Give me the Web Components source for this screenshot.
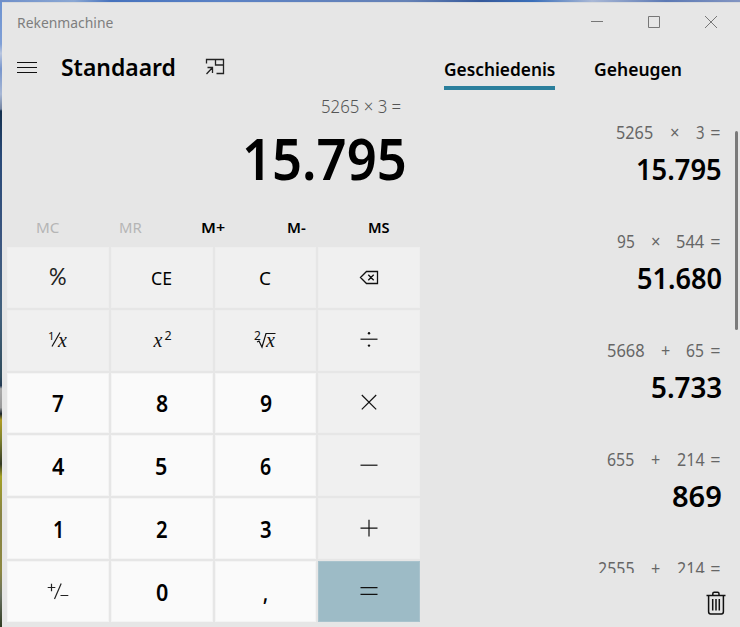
<!DOCTYPE html>
<html lang="nl"><head><meta charset="utf-8"><title>Rekenmachine</title>
<style>html,body{margin:0;width:740px;height:627px;overflow:hidden;background:#e6e6e6}</style></head>
<body><calc-window></calc-window>
<script>
const define=(name,html,init)=>{
  const t=document.createElement('template');t.innerHTML=html;
  customElements.define(name,class extends HTMLElement{
    connectedCallback(){
      if(this.shadowRoot)return;
      this.attachShadow({mode:'open'}).append(t.content.cloneNode(true));
      if(init)init.call(this,this.shadowRoot);
    }
  });
};
const ctx=document.createElement('canvas').getContext('2d');

/* One line of text condensed or widened to a given ink width */
define('fit-text',`<style>
:host{display:block;flex:none;white-space:pre}
span{display:block;width:max-content;transform-origin:0 50%}
</style><span><slot></slot></span>`,function(r){
  const cs=getComputedStyle(this),s=r.querySelector('span');
  ctx.font=`${cs.fontStyle} ${cs.fontWeight} ${cs.fontSize} ${cs.fontFamily}`;
  const m=ctx.measureText(this.textContent),ink=m.actualBoundingBoxRight+m.actualBoundingBoxLeft;
  const w=+this.getAttribute('ink'),k=w/ink;
  this.style.width=w+'px';
  s.style.transform=`scaleX(${k})`;
  s.style.marginLeft=m.actualBoundingBoxLeft*k+'px';
});

define('title-bar',`<style>
:host{display:flex;align-items:center;height:40px;padding:0 22px 0 15px;box-sizing:border-box;justify-content:space-between}
fit-text{font-size:15px;line-height:20px;color:#7e7e7e;padding-left:1px}
div{display:flex;gap:43px}
svg{display:block;width:14px;height:14px;fill:none;stroke:#777}
</style><fit-text ink="95">Rekenmachine</fit-text><div>
<svg><path d="M1 6.5H13"/></svg><svg><path d="M1.5 1.5h11v11h-11z"/></svg><svg><path d="M1 1L13 13M13 1L1 13"/></svg></div>`);

define('mode-header',`<style>
:host{display:flex;align-items:center;height:48px;padding:1px 0 0 15px}
svg{display:block;fill:none;stroke:#111;flex:none}
fit-text{font-size:24px;line-height:48px;font-weight:600;margin-left:24.5px}
.pin{margin-left:30px}
</style><svg width="20" height="14"><path d="M0 2.5H20M0 7.5H20M0 12.5H20"/></svg>
<fit-text ink="113">Standaard</fit-text>
<svg class="pin" width="20" height="18"><g stroke="#222" stroke-width="1.3"><path d="M1.5 5.5V1.5H18.5V15.5H11.5M10.5 1.5V7H18.5M1.5 16L7.5 9.5M2.5 9.5H7.5V15"/></g></svg>`);

define('calc-display',`<style>
:host{display:flex;flex-direction:column;align-items:flex-end;height:117px;box-sizing:border-box;padding:1px 15.5px 0 0}
.e{font-size:18px;font-weight:350;line-height:28px;color:#555;margin-right:3.5px}
.r{font-size:58.5px;font-weight:600;line-height:70px;margin-top:2px}
</style><fit-text class="e" ink="79">5265 × 3 =</fit-text><fit-text class="r" ink="159">15.795</fit-text>`);

define('memory-row',`<style>
:host{display:grid;grid-template-columns:repeat(5,1fr);height:39px;box-sizing:border-box;margin:0 0 0 4px;width:415px}
div{display:flex;justify-content:center;align-items:center;font-size:14.8px;line-height:20px;font-weight:600;height:38px}
.off{font-weight:400;color:#b5b5b5;padding-left:1px}
</style><div class="off"><fit-text ink="22">MC</fit-text></div><div class="off"><fit-text ink="21.5">MR</fit-text></div><div><fit-text ink="22.5">M+</fit-text></div><div><fit-text ink="18">M-</fit-text></div><div><fit-text ink="20.5">MS</fit-text></div>`);

define('calc-key',`<style>
:host{display:flex;align-items:center;justify-content:center;background:#f0f0f0;box-shadow:inset 0 0 0 1px #eeeeee;min-width:0;min-height:0;font-size:18px;font-weight:300}
:host([kind=num]){background:#fafafa;box-shadow:inset 0 0 0 1px #f4f4f4;font-size:22.5px;font-weight:600}
:host([kind=eq]){background:#9dbbc6;box-shadow:inset 0 0 0 1px #a9c3cd}
::slotted(svg){display:block;overflow:visible;fill:none;stroke:#111;stroke-width:1.2}
</style><slot></slot>`);

define('key-pad',`<style>
:host{display:grid;grid-template:repeat(6,1fr)/repeat(4,1fr);gap:2px;width:413px;height:375px;margin-left:5px}
fit-text{line-height:30px}
[kind=num] fit-text{margin-top:2.6px}
text{stroke:none;fill:#111;font-weight:400;font-family:"Noto Sans","Open Sans",sans-serif}
.x{font:italic 20px "Liberation Serif",serif}
</style>
<calc-key><fit-text ink="17.5" style="font:400 22.5px/30px Lato,sans-serif;color:#222">%</fit-text></calc-key>
<calc-key><fit-text ink="19" style="font-weight:375;margin-top:2px">CE</fit-text></calc-key>
<calc-key><fit-text ink="10.5" style="font-weight:375;margin-top:2px">C</fit-text></calc-key>
<calc-key><svg width="20" height="16" style="margin-top:1px"><path stroke-width="1.3" d="M1.5 7.5L7.5 1.5H18.5V13.5H7.5zM9.3 4.8L14.7 10.2M14.7 4.8L9.3 10.2"/></svg></calc-key>
<calc-key><svg width="20" height="20" style="margin-top:2px"><text x="0" y="8.5" font-size="11.5">1</text><path d="M12 1.5L4 15.5"/><text class="x" x="10" y="15.5">x</text></svg></calc-key>
<calc-key><svg width="20" height="20" style="margin-top:2px"><text class="x" x="1.5" y="15.5">x</text><text x="12.5" y="9" font-size="12.5">2</text></svg></calc-key>
<calc-key><svg width="22" height="20" style="margin-top:2px"><text x="0" y="8.5" font-size="12">2</text><path d="M3 11L5 10L8 16L12 2.5H21.5"/><text class="x" x="12" y="15.5">x</text></svg></calc-key>
<calc-key><svg width="18" height="18"><path d="M.5 8.2H17.5"/><g fill="#111" stroke="none"><circle cx="9" cy="2.2" r="1.2"/><circle cx="9" cy="14.6" r="1.2"/></g></svg></calc-key>
<calc-key kind="num"><fit-text ink="11">7</fit-text></calc-key><calc-key kind="num"><fit-text ink="11.3">8</fit-text></calc-key><calc-key kind="num"><fit-text ink="11.3">9</fit-text></calc-key>
<calc-key><svg width="18" height="18"><path d="M1.8 1L16.2 15.4M16.2 1L1.8 15.4"/></svg></calc-key>
<calc-key kind="num"><fit-text ink="12.5">4</fit-text></calc-key><calc-key kind="num"><fit-text ink="10.5">5</fit-text></calc-key><calc-key kind="num"><fit-text ink="11.3">6</fit-text></calc-key>
<calc-key><svg width="18" height="18"><path d="M.5 8.2H17.5"/></svg></calc-key>
<calc-key kind="num"><fit-text ink="7" style="margin-right:2px">1</fit-text></calc-key><calc-key kind="num"><fit-text ink="10.8">2</fit-text></calc-key><calc-key kind="num"><fit-text ink="10.8">3</fit-text></calc-key>
<calc-key><svg width="18" height="18"><path d="M.5 8.2H17.5M9-.2V16.6"/></svg></calc-key>
<calc-key kind="num"><svg width="22" height="18" style="stroke:#222"><path d="M.7 4.5H8.3M4.5.8V8.2M14.2.5L7.5 16M13.5 12.5H21.3"/></svg></calc-key><calc-key kind="num"><fit-text ink="11.5">0</fit-text></calc-key><calc-key kind="num"><fit-text ink="4">,</fit-text></calc-key>
<calc-key kind="eq"><svg width="18" height="18"><path stroke-width="1.3" d="M.5 4.7H17.5M.5 11.3H17.5"/></svg></calc-key>`);

define('tab-list',`<style>
:host{display:flex;gap:40px;height:48px;font-size:18px;font-weight:600;line-height:28px;padding-left:24px}
div{padding-top:13px;height:34px;box-sizing:border-box}
fit-text{margin-right:-.5px;padding-left:.5px}
.on{border-bottom:4px solid #2b7f9c;height:48px}
</style><div class="on"><fit-text ink="110.5">Geschiedenis</fit-text></div><div><fit-text ink="86.5">Geheugen</fit-text></div>`);

define('history-item',`<style>
:host{display:block;height:109px}
div{display:flex;justify-content:flex-end;font-size:18px;font-weight:375;line-height:26px;color:#666;padding-right:2.3px}
b{display:flex;justify-content:flex-end;font-size:29.5px;font-weight:600;line-height:40px;margin-top:4px;padding-right:1.4px}
</style><div></div><b></b>`,function(r){
  const d=r.querySelector('div');
  for(const p of this.getAttribute('expr').split(' ')){
    const [t,w,g]=p.split('|'),f=document.createElement('fit-text');
    f.textContent=t;f.setAttribute('ink',w);f.style.marginLeft=(g||0)+'px';d.append(f);
  }
  if(this.hasAttribute('result')){
    const [t,w]=this.getAttribute('result').split('|'),f=document.createElement('fit-text');
    f.textContent=t;f.setAttribute('ink',w);r.querySelector('b').append(f);
  }
});

define('history-list',`<style>
:host{display:flex;height:483px;overflow:hidden;justify-content:space-between}
section{flex:1;padding-top:29px}
i{display:block;width:2.5px;height:199px;border-radius:2px;background:#7a7a7a;margin:41px 2.5px 0 12.5px}
</style><section>
<history-item expr="5265|36 ×|8.3|17.7 3|8.3|16.7 =|9|7.2" result="15.795|83"></history-item>
<history-item expr="95|17.5 ×|8.3|17.7 544|27|17 =|9|7.2" result="51.680|83.3"></history-item>
<history-item expr="5668|36.5 +|9|16.3 65|17.7|16.7 =|9|7.2" result="5.733|69.5"></history-item>
<history-item expr="655|27 +|9|16.7 214|27.3|16.7 =|9|7.2" result="869|48"></history-item>
<history-item expr="2555|36.3 +|9|16.7 214|27.3|16.7 =|9|7.2"></history-item>
</section><i></i>`);

define('delete-button',`<style>
:host{display:flex;justify-content:flex-end;padding:18px 14px 0 0}
svg{display:block;fill:none;stroke:#111;stroke-width:1.5}
</style><svg width="20" height="25"><path d="M.5 4.5H19.5M6.8 4V2.8Q6.8 1.2 8.2 1.2H11.6Q13 1.2 13 2.8V4M2.6 4.5V20.8Q2.6 23 4.6 23H15.4Q17.4 23 17.4 20.8V4.5M6.7 8V19.5M10 8V19.5M13.3 8V19.5"/></svg>`);

define('calc-window',`<style>
:host{display:block;box-sizing:border-box;width:740px;height:627px;padding:2px 0 0 2px;font-family:"Noto Sans","Open Sans",sans-serif;color:#000;
background:linear-gradient(90deg,#6f8fc9,#8ba8d4 10%,#4672bd 15%,#5b82c5 30%,#6682b6 55%,#35599b 65%,#3a6fba 72%,#a9b8d6 80%,#5c79b4 90%,#8295c2) 0 0/740px 2px no-repeat,
linear-gradient(#6c92d0,#7f9fd6 7%,#b9c6df 8.5%,#7795cc 11%,#a7b7d5 15%,#71829f 17.4%,#14304e 17.7%,#294a78 25%,#3b5680 38%,#42617d 50%,#304c5c 60%,#243b55 61.5%,#aaa 62%,#999 65%,#19242a 66%,#b09c22 67%,#7f822d 70%,#343a25 74%,#a4a125 76%,#888445 82%,#8c8740 91%,#687060 95%,#303b22) 0 0/2px 627px no-repeat,#e6e6e6}
main{background:#e6e6e6;box-shadow:inset 0 1px #d8dadd;height:625px}
.cols{display:flex}
.calc{width:418px;flex:none}
.side{flex:1;min-width:0}
</style><main><title-bar></title-bar><div class="cols"><div class="calc"><mode-header></mode-header><calc-display></calc-display><memory-row></memory-row><key-pad></key-pad></div>
<div class="side"><tab-list></tab-list><history-list></history-list><delete-button></delete-button></div></div></main>`);
</script></body></html>
